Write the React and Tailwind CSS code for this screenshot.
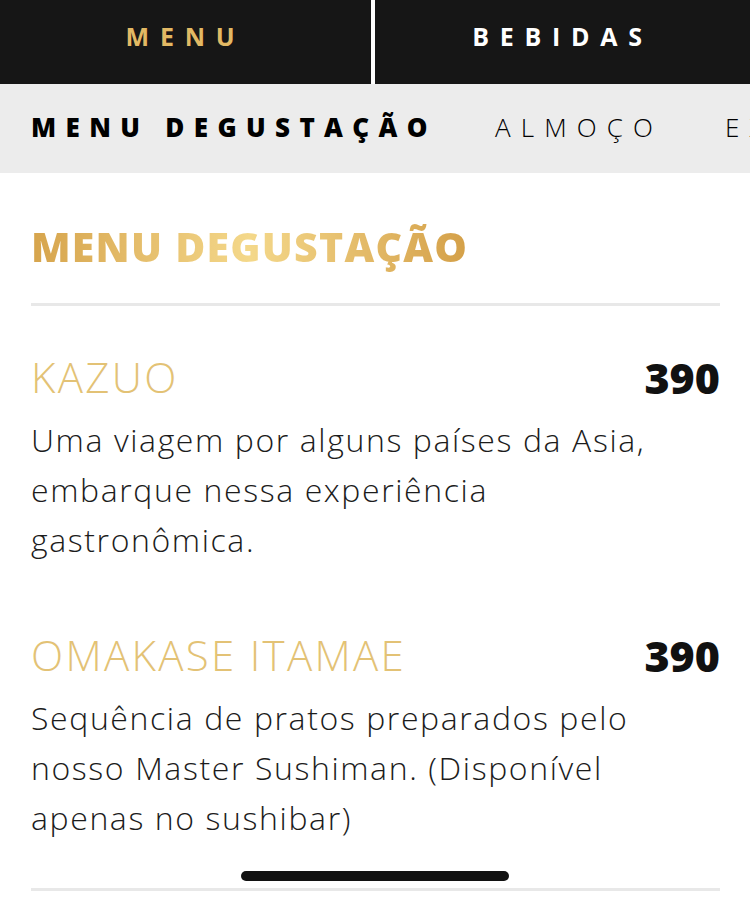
import React from "react";

const items = [
  {
    name: "KAZUO",
    price: "390",
    desc: "Uma viagem por alguns países da Asia, embarque nessa experiência gastronômica.",
  },
  {
    name: "OMAKASE ITAMAE",
    price: "390",
    desc: "Sequência de pratos preparados pelo nosso Master Sushiman. (Disponível apenas no sushibar)",
  },
];

function MenuItem({ name, price, desc }) {
  return (
    <div>
      <div className="flex items-center justify-between h-[44px]">
        <span className="text-[42px] font-light tracking-[0.055em] text-[#e3c275] leading-none">{name}</span>
        <span className="text-[43px] font-extrabold text-[#111] leading-none">{price}</span>
      </div>
      <p className="mt-[16px] text-[32px] font-light tracking-[0.05em] leading-[50px] text-[#1c1c1c] pr-[40px]">{desc}</p>
    </div>
  );
}

export default function App() {
  return (
    <div className="w-[750px] h-[897px] overflow-hidden bg-white relative" style={{ fontFamily: '"Open Sans", "Liberation Sans", sans-serif' }}>
      {/* top tabs */}
      <div className="flex h-[84px] bg-white">
        <div className="w-[371px] bg-[#161616] flex items-center justify-center pb-[10px]">
          <span className="text-[25px] font-bold tracking-[0.43em] text-[#e2b964]">MENU</span>
        </div>
        <div className="w-[4px]" />
        <div className="flex-1 bg-[#161616] flex items-center justify-center pb-[10px]">
          <span className="text-[25px] font-bold tracking-[0.43em] text-white">BEBIDAS</span>
        </div>
      </div>

      {/* sub tabs */}
      <div className="h-[89px] bg-[#ececec] flex items-center whitespace-nowrap overflow-hidden pl-[31px] pb-[2px]">
        <span className="text-[26px] font-extrabold tracking-[0.36em] text-black">MENU DEGUSTAÇÃO</span>
        <span className="ml-[58px] text-[26px] font-light tracking-[0.39em] text-black">ALMOÇO</span>
        <span className="ml-[62px] text-[26px] font-light tracking-[0.39em] text-black">EXECUTIVO</span>
      </div>

      <div className="pl-[31px] pr-[30px]">
        <h1 className="pt-[48px] h-[130px] text-[41px] font-extrabold leading-[50px] tracking-[0.03em]">
          <span className="bg-gradient-to-r from-[#d6a44c] via-[#f4d88a] to-[#d4a048] bg-clip-text text-transparent">MENU DEGUSTAÇÃO</span>
        </h1>
        <div className="h-[3px] bg-[#e8e8e8]" />
        <div className="flex flex-col gap-[68px] pt-[49px] pb-[45px]">
          {items.map((it) => (
            <MenuItem key={it.name} {...it} />
          ))}
        </div>
        <div className="h-[3px] bg-[#e8e8e8]" />
      </div>

      {/* home indicator */}
      <div className="absolute left-[241px] top-[871px] w-[268px] h-[10px] rounded-full bg-[#111]" />
    </div>
  );
}
